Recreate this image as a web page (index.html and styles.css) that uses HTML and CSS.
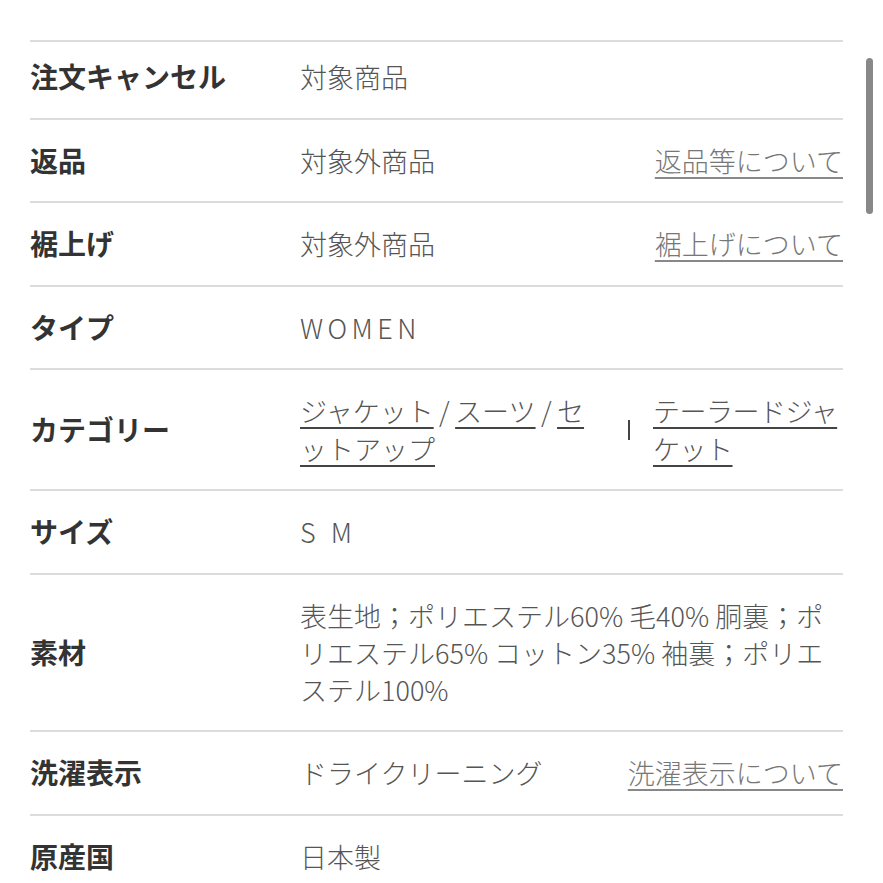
FILE: index.html
```html
<!DOCTYPE html>
<html lang="ja">
<head>
<meta charset="utf-8">
<link rel="stylesheet" href="styles.css">
</head>
<body>
<div class="page">
  <div class="spec">
    <div class="row row-first">
      <div class="label">注文キャンセル</div>
      <div class="value">対象商品</div>
    </div>
    <div class="row">
      <div class="label">返品</div>
      <div class="value">対象外商品</div>
      <a class="help" href="#">返品等について</a>
    </div>
    <div class="row">
      <div class="label">裾上げ</div>
      <div class="value">対象外商品</div>
      <a class="help" href="#">裾上げについて</a>
    </div>
    <div class="row">
      <div class="label">タイプ</div>
      <div class="value latin">WOMEN</div>
    </div>
    <div class="row">
      <div class="label">カテゴリー</div>
      <div class="value cat">
        <div class="cat-main"><a href="#">ジャケット</a>&thinsp;/&thinsp;<a href="#">スーツ</a>&thinsp;/&thinsp;<a href="#">セットアップ</a></div>
        <div class="cat-sep"></div>
        <div class="cat-sub"><a href="#">テーラードジャケット</a></div>
      </div>
    </div>
    <div class="row">
      <div class="label">サイズ</div>
      <div class="value latin">S M</div>
    </div>
    <div class="row">
      <div class="label">素材</div>
      <div class="value material">表生地；ポリエステル60% 毛40% 胴裏；ポリエステル65% コットン35% 袖裏；ポリエステル100%</div>
    </div>
    <div class="row">
      <div class="label">洗濯表示</div>
      <div class="value">ドライクリーニング</div>
      <a class="help" href="#">洗濯表示について</a>
    </div>
    <div class="row">
      <div class="label">原産国</div>
      <div class="value">日本製</div>
    </div>
  </div>
  <div class="scrollbar"></div>
</div>
</body>
</html>
```

FILE: styles.css
```css
html, body {
  margin: 0;
  padding: 0;
  background: #fff;
}
body {
  font-family: "Noto Sans CJK JP", "Noto Sans", sans-serif;
  color: #555;
}
.page {
  position: relative;
  width: 883px;
  height: 883px;
  overflow: hidden;
  padding-top: 40px;
  box-sizing: border-box;
}
.spec {
  margin-left: 30px;
  width: 813px;
}
.row {
  display: flex;
  align-items: center;
  border-top: 2px solid #dcdcdc;
  padding: 22px 0;
  min-height: 37.2px;
}
.row-first {
  padding: 16px 0 22px;
}
.label {
  width: 270px;
  flex: none;
  font-size: 28px;
  font-weight: 700;
  color: #333;
  line-height: 37.5px;
}
.value {
  flex: 1;
  font-size: 27px;
  font-weight: 300;
  line-height: 37.5px;
  color: #555;
}
.latin {
  letter-spacing: 4.5px;
}
.help {
  font-size: 27px;
  font-weight: 300;
  color: #777;
  line-height: 37.5px;
  text-decoration: underline;
  text-decoration-thickness: 2px;
  text-underline-offset: 5px;
  text-decoration-color: #888;
}
.cat {
  display: flex;
  align-items: center;
}
.cat a {
  color: #555;
  text-decoration: underline;
  text-decoration-thickness: 2px;
  text-underline-offset: 5px;
  text-decoration-color: #444;
}
.cat-main {
  width: 305px;
  flex: none;
}
.cat-sep {
  width: 2px;
  height: 20px;
  margin: 0 23px;
  flex: none;
  background: #444;
}
.cat-sub {
  flex: 1;
  letter-spacing: -0.5px;
}
.material {
  line-height: 37.2px;
}
.scrollbar {
  position: absolute;
  left: 866px;
  top: 58px;
  width: 7px;
  height: 156px;
  border-radius: 4px;
  background: #888;
}
```
